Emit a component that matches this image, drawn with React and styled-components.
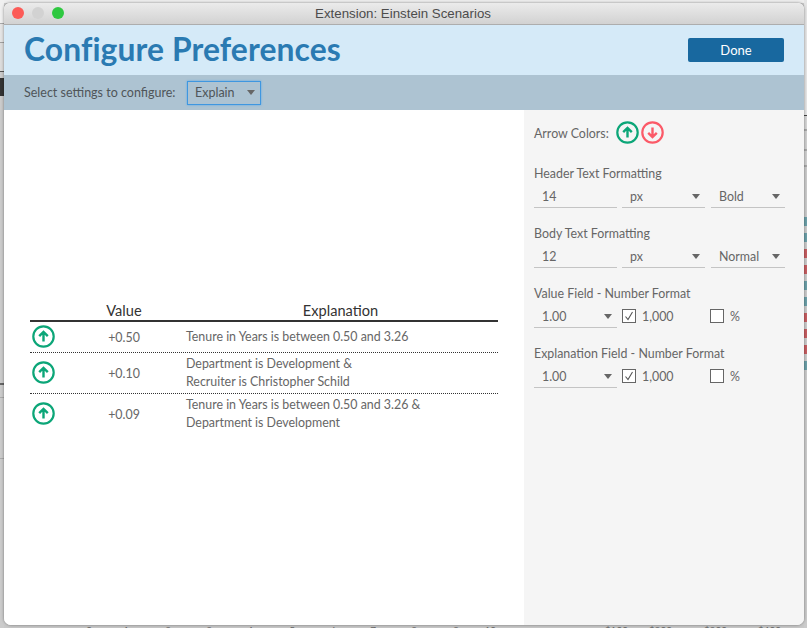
import React from 'react'
import styled, { createGlobalStyle } from 'styled-components'

const Global = createGlobalStyle`
  html, body {
    margin: 0;
    padding: 0;
    width: 807px;
    height: 628px;
    overflow: hidden;
    background: #cbcbcb;
    font-family: Lato, "Open Sans", "Liberation Sans", sans-serif;
  }
`

const Page = styled.div`
  width: 807px;
  height: 628px;
  display: flex;
  overflow: hidden;
`

const LeftGutter = styled.div`
  width: 4px;
  flex: none;
  background: linear-gradient(
    #f0f0f0 0, #f0f0f0 23px, #a8a8a8 23px, #a8a8a8 24px, #e4e4e4 24px, #e4e4e4 42px,
    #a0a0a0 42px, #a0a0a0 43px, #dcdcdc 43px, #dcdcdc 71px, #555 71px, #555 72px,
    #cbcbcb 72px, #cbcbcb 78px, #333 78px, #333 96px, #cbcbcb 96px, #cbcbcb 383px,
    #666 383px, #666 385px, #cbcbcb 385px, #cbcbcb 397px, #aaa 397px, #aaa 398px,
    #cbcbcb 398px, #cbcbcb 458px, #aaa 458px, #aaa 459px, #cbcbcb 459px
  );
`

const Middle = styled.div`
  width: 800px;
  flex: none;
  display: flex;
  flex-direction: column;
`

const TopStrip = styled.div`
  height: 3px;
  flex: none;
  background: #eeeeee;
`

const BottomStrip = styled.div`
  height: 3px;
  flex: none;
  overflow: hidden;
  display: flex;
  background: #c8c8c8;
  color: #666;
  font-size: 10px;
  line-height: 10px;
`

const Tick = styled.span`
  flex: none;
  width: ${p => p.$w}px;
  text-align: right;
`

const Window = styled.div`
  height: 622px;
  flex: none;
  display: flex;
  flex-direction: column;
  border-radius: 6px 6px 7px 7px;
  overflow: hidden;
  background: #fff;
  box-shadow: 0 0 3px rgba(0, 0, 0, 0.45);
  position: relative;
`

const TitleBar = styled.div`
  height: 21px;
  flex: none;
  display: flex;
  align-items: center;
  position: relative;
  justify-content: center;
  padding-right: 2px;
  background: linear-gradient(#ebebeb, #d2d2d2);
  border-bottom: 1px solid #adadad;
  color: #4c4c4c;
  font-family: "Liberation Sans", sans-serif;
  font-size: 13.3px;
`

const Lights = styled.div`
  position: absolute;
  left: 8px;
  top: 4px;
  display: flex;
  gap: 8px;
`

const Light = styled.span`
  width: 12px;
  height: 12px;
  border-radius: 50%;
  background: ${p => p.$c};
`

const Header = styled.div`
  height: 50px;
  flex: none;
  display: flex;
  align-items: center;
  justify-content: space-between;
  padding: 0 20px;
  background: #d5eaf8;
`

const Title = styled.h1`
  margin: -3px 0 0;
  color: #2a7ab2;
  font-size: 31.8px;
  font-weight: 700;
  letter-spacing: 0.1px;
`

const Done = styled.button`
  width: 96px;
  height: 24px;
  border: none;
  border-radius: 2px;
  background: #18689f;
  color: #fff;
  font-family: inherit;
  font-size: 13px;
`

const ConfigBar = styled.div`
  height: 35px;
  flex: none;
  display: flex;
  align-items: center;
  padding-left: 20px;
  background: #adc3d2;
  color: #4f5559;
  font-size: 12.5px;
`

const ConfigLabel = styled.span`
  width: 163px;
  flex: none;
`

const ConfigSelect = styled.div`
  width: 74px;
  height: 24px;
  display: flex;
  align-items: center;
  justify-content: space-between;
  padding: 0 5px 0 7px;
  box-sizing: border-box;
  border: 1px solid #3f97e0;
  box-shadow: 0 0 2px #5aa8e8;
`

const Caret = styled.span`
  width: 0;
  height: 0;
  border-left: 4px solid transparent;
  border-right: 4px solid transparent;
  border-top: 5px solid #666;
`

const Body = styled.div`
  flex: 1;
  display: flex;
  min-height: 0;
`

const Preview = styled.div`
  width: 520px;
  flex: none;
  display: flex;
  flex-direction: column;
  justify-content: center;
  padding: 0 26px;
  box-sizing: border-box;
  background: #fff;
`

const Table = styled.div`
  width: 468px;
`

const HeadRow = styled.div`
  display: grid;
  grid-template-columns: 35px 118px 1fr;
  box-sizing: border-box;
  height: 21px;
  align-items: center;
  border-bottom: 2px solid #333;
  color: #333;
  font-size: 14.6px;
  text-align: center;
`

const Row = styled.div`
  display: grid;
  grid-template-columns: 35px 118px 1fr;
  box-sizing: border-box;
  align-items: center;
  height: ${p => p.$h}px;
  border-bottom: ${p => (p.$last ? 'none' : '1px dotted #333')};
  color: #666;
  font-size: 12.4px;
`

const RowIcon = styled.div`
  display: flex;
  padding-left: 2px;
  margin-top: -2px;
`

const RowValue = styled.div`
  text-align: center;
`

const RowText = styled.div`
  padding-left: 3px;
  line-height: 18px;
`

const Side = styled.div`
  flex: 1;
  background: #f5f5f5;
  padding: 11px 0 0 10px;
  color: #666;
  font-size: 12.4px;
`

const ArrowRow = styled.div`
  display: flex;
  align-items: center;
  gap: 2px;
  height: 23px;
  margin-bottom: 21px;
`

const ArrowLabel = styled.span`
  width: 80px;
  flex: none;
  margin-top: 2px;
`

const Section = styled.div`
  height: 60px;
`

const SectionLabel = styled.div`
  height: 16px;
  line-height: 18px;
`

const Fields = styled.div`
  display: flex;
  align-items: center;
  margin-top: 3px;
`

const Field = styled.div`
  width: ${p => p.$w}px;
  height: 24px;
  margin-right: ${p => p.$gap || 0}px;
  display: flex;
  align-items: center;
  justify-content: space-between;
  box-sizing: border-box;
  padding: 2px 5px 0 8px;
  border-bottom: 1px solid #c4c4c4;
  flex: none;
`

const Check = styled.span`
  width: 14px;
  height: 14px;
  flex: none;
  box-sizing: border-box;
  border: 1px solid #666;
  background: #fff;
  display: flex;
  align-items: center;
  justify-content: center;
`

const CheckLabel = styled.span`
  width: ${p => p.$w}px;
  flex: none;
  padding-left: 6px;
  box-sizing: border-box;
`

const RightGutter = styled.div`
  width: 3px;
  flex: none;
  padding-top: 217px;
  background: linear-gradient(
    #e6e6e6 0, #e6e6e6 115px, #444 115px, #444 116px, #d6d6d6 116px, #d6d6d6 129px,
    #a8a8a8 129px, #a8a8a8 131px, #d0d0d0 131px, #d0d0d0 149px, #a8a8a8 149px, #a8a8a8 151px,
    #d0d0d0 151px, #d0d0d0 165px, #a8a8a8 165px, #a8a8a8 167px, #cbcbcb 167px
  );
`

const Stripe = styled.div`
  height: 9px;
  margin-bottom: 7px;
  background: ${p => (p.$red ? '#c65d61' : '#6b9fa8')};
`

const ArrowIcon = ({ down, color }) => (
  <svg width="23" height="23" viewBox="0 0 23 23" fill="none" stroke={color}>
    <circle cx="11.5" cy="11.5" r="10.2" strokeWidth="2.2" />
    {down ? (
      <path d="M11.5 6.5V16.2M7.2 11.8l4.3 4.3 4.3-4.3" strokeWidth="2.4" />
    ) : (
      <path d="M11.5 16.5V6.8M7.2 11.2l4.3-4.3 4.3 4.3" strokeWidth="2.4" />
    )}
  </svg>
)

const Tickmark = () => (
  <svg width="10" height="10" viewBox="0 0 10 10" fill="none" stroke="#555" strokeWidth="1.1">
    <path d="M1.5 5.5L4 8.5 8.5 1" />
  </svg>
)

const GREEN = '#0ca678'
const RED = '#fb5a68'

const rows = [
  { h: 31, value: '+0.50', text: ['Tenure in Years is between 0.50 and 3.26'] },
  { h: 41, value: '+0.10', text: ['Department is Development &', 'Recruiter is Christopher Schild'] },
  { h: 40, value: '+0.09', text: ['Tenure in Years is between 0.50 and 3.26 &', 'Department is Development'], last: true },
]

const stripes = [0, 0, 1, 1, 0, 0, 1, 1, 1, 0]
const ticks = [
  [88, '0'], [37, '1'], [42, '2'], [41, '3'], [41, '4'], [42, '5'], [41, '6'], [40, '7'], [41, '8'], [42, '9'], [37, '10'],
  [132, '$100'], [44, '$200'], [55, '$300'], [54, '$400'],
]

const NumberRow = () => (
  <Fields>
    <Field $w={83} $gap={5}>1.00<Caret /></Field>
    <Check><Tickmark /></Check>
    <CheckLabel $w={74}>1,000</CheckLabel>
    <Check />
    <CheckLabel $w={30}>%</CheckLabel>
  </Fields>
)

export default function App() {
  return (
    <Page>
      <Global />
      <LeftGutter />
      <Middle>
        <TopStrip />
        <Window>
          <TitleBar>
            <Lights>
              <Light $c="#fc5b57" />
              <Light $c="#d2d2d2" />
              <Light $c="#2ec840" />
            </Lights>
            Extension: Einstein Scenarios
          </TitleBar>
          <Header>
            <Title>Configure Preferences</Title>
            <Done>Done</Done>
          </Header>
          <ConfigBar>
            <ConfigLabel>Select settings to configure:</ConfigLabel>
            <ConfigSelect>Explain<Caret /></ConfigSelect>
          </ConfigBar>
          <Body>
            <Preview>
              <Table>
                <HeadRow>
                  <span />
                  <span>Value</span>
                  <span>Explanation</span>
                </HeadRow>
                {rows.map(r => (
                  <Row key={r.value} $h={r.h} $last={r.last}>
                    <RowIcon><ArrowIcon color={GREEN} /></RowIcon>
                    <RowValue>{r.value}</RowValue>
                    <RowText>
                      {r.text.map(t => <div key={t}>{t}</div>)}
                    </RowText>
                  </Row>
                ))}
              </Table>
            </Preview>
            <Side>
              <ArrowRow>
                <ArrowLabel>Arrow Colors:</ArrowLabel>
                <ArrowIcon color={GREEN} />
                <ArrowIcon down color={RED} />
              </ArrowRow>
              <Section>
                <SectionLabel>Header Text Formatting</SectionLabel>
                <Fields>
                  <Field $w={83} $gap={5}>14</Field>
                  <Field $w={83} $gap={6}>px<Caret /></Field>
                  <Field $w={74}>Bold<Caret /></Field>
                </Fields>
              </Section>
              <Section>
                <SectionLabel>Body Text Formatting</SectionLabel>
                <Fields>
                  <Field $w={83} $gap={5}>12</Field>
                  <Field $w={83} $gap={6}>px<Caret /></Field>
                  <Field $w={74}>Normal<Caret /></Field>
                </Fields>
              </Section>
              <Section>
                <SectionLabel>Value Field - Number Format</SectionLabel>
                <NumberRow />
              </Section>
              <Section>
                <SectionLabel>Explanation Field - Number Format</SectionLabel>
                <NumberRow />
              </Section>
            </Side>
          </Body>
        </Window>
        <BottomStrip>
          {ticks.map(([w, t]) => <Tick key={t} $w={w}>{t}</Tick>)}
        </BottomStrip>
      </Middle>
      <RightGutter>
        {stripes.map((red, i) => <Stripe key={i} $red={red} />)}
      </RightGutter>
    </Page>
  )
}
